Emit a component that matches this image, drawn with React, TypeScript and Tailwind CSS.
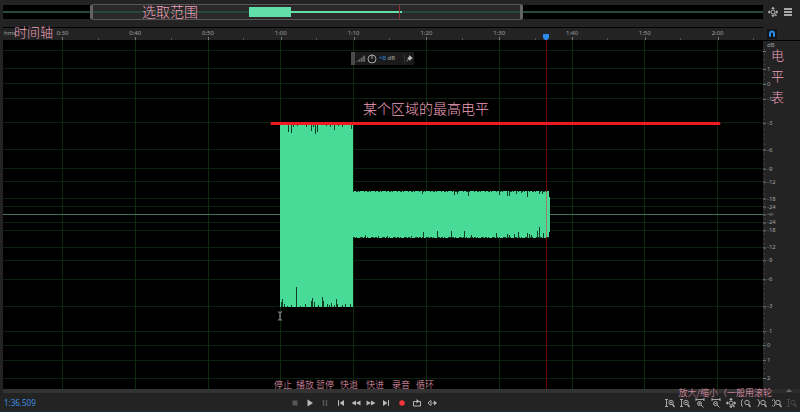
import { useState } from "react";
import type { ReactNode } from "react";

const TIMES = ["0:30", "0:40", "0:50", "1:00", "1:10", "1:20", "1:30", "1:40", "1:50", "2:00"];

// vertical position of every level on the dB scale, inside the 349px editor
const LEVELS: [string, number][] = [
  ["", 10],
  ["1", 28],
  ["0", 43],
  ["-1", 58],
  ["-3", 82],
  ["-6", 109],
  ["-9", 128],
  ["-12", 141],
  ["-18", 158],
  ["-24", 166],
  ["-∞", 174],
  ["-24", 182],
  ["-18", 190],
  ["-12", 207],
  ["-9", 220],
  ["-6", 239],
  ["-3", 266],
  ["-1", 291],
  ["0", 305],
  ["1", 320],
  ["2", 338],
];

// [x, depth] of the notches cut in the edges of the wave form
const LOUD_TOP = [
  [2, 1], [5, 1], [8, 8], [11, 9], [13, 3], [17, 2], [22, 1], [26, 3], [31, 7], [33, 3],
  [35, 10], [37, 8], [40, 1], [46, 2], [50, 3], [54, 6], [58, 2], [62, 3], [65, 1], [71, 5],
];
const LOUD_BOTTOM = [
  [1, 5], [2, 8], [4, 3], [7, 1], [11, 2], [16, 20], [20, 1], [25, 3], [31, 6], [32, 9],
  [34, 5], [38, 2], [42, 10], [43, 6], [47, 3], [49, 2], [51, 4], [54, 2], [56, 8], [57, 3],
  [62, 2], [65, 3], [70, 3],
];
const QUIET_TOP = [
  [69, 3], [101, 4], [104, 3], [115, 5], [146, 4], [154, 5], [156, 5], [163, 3], [168, 2], [174, 6], [186, 3], [189, 3],
];
const QUIET_BOTTOM = [
  [12, 3], [25, 2], [34, 2], [58, 2], [70, 6], [84, 7], [98, 7], [111, 7], [118, 3], [143, 5],
  [154, 4], [156, 3], [161, 4], [165, 6], [174, 5], [176, 4], [178, 3], [184, 7], [186, 11], [190, 5],
];

type IconProps = { children: ReactNode; className?: string };

function Icon({ children, className = "size-[10px]" }: IconProps) {
  return (
    <svg
      viewBox="0 0 20 20"
      className={className}
      fill="none"
      stroke="currentColor"
      strokeWidth="2"
      aria-hidden="true"
    >
      {children}
    </svg>
  );
}

const lens = (
  <>
    <circle cx="12" cy="9" r="4.5" />
    <path d="M15 12.5 19 18" strokeWidth="3" />
  </>
);

const navigatorLens = (
  <>
    <circle cx="10" cy="10" r="4" />
    <path d="m13 13 4 5M0 10h5M15 10h5M10 0v5M10 15v4" strokeWidth="2.5" />
    <path d="M0 10l4-4v8zM20 10l-4-4v8zM10 0 6 4h8zM10 20l-4-4h8z" fill="currentColor" stroke="none" />
  </>
);

const TRANSPORT = [
  { name: "Stop", tone: "text-[#565656]", icon: <path d="M5 5h10v10H5z" fill="currentColor" stroke="none" /> },
  { name: "Play", tone: "text-[#b8b8b8]", icon: <path d="M5 3l11 7-11 7z" fill="currentColor" stroke="none" /> },
  { name: "Pause", tone: "text-[#565656]", icon: <path d="M7 4v12M13 4v12" strokeWidth="3" /> },
  {
    name: "Go to previous",
    tone: "text-[#b8b8b8]",
    icon: <path d="M4 4h2v12H4zM16 4v12l-9-6z" fill="currentColor" stroke="none" />,
  },
  {
    name: "Rewind",
    tone: "text-[#b8b8b8]",
    icon: <path d="M10 5v10l-9-5zM19 5v10l-9-5z" fill="currentColor" stroke="none" />,
  },
  {
    name: "Fast forward",
    tone: "text-[#b8b8b8]",
    icon: <path d="M1 5v10l9-5zM10 5v10l9-5z" fill="currentColor" stroke="none" />,
  },
  {
    name: "Go to next",
    tone: "text-[#b8b8b8]",
    icon: <path d="M14 4h2v12h-2zM4 4v12l9-6z" fill="currentColor" stroke="none" />,
  },
  { name: "Record", tone: "text-[#f2363c]", icon: <circle cx="10" cy="10" r="5.5" fill="currentColor" stroke="none" /> },
  {
    name: "Loop playback",
    tone: "text-[#b8b8b8]",
    icon: (
      <>
        <path d="M7 7H3v9h14V7h-3M7 7h5" />
        <path d="M9 2v9l6-4.5z" fill="currentColor" stroke="none" />
      </>
    ),
  },
  {
    name: "Skip selection",
    tone: "text-[#b8b8b8]",
    icon: (
      <>
        <path d="M7 5 2 10l5 5M8 5v10M11 10h4" />
        <path d="M14 5v10l6-5z" fill="currentColor" stroke="none" />
      </>
    ),
  },
];

const ZOOMS = [
  {
    name: "Zoom in amplitude",
    tone: "text-[#a8a8a8]",
    icon: <>{lens}<path d="M0 3h6M0 17h6M3 3v14M12 7v4M10 9h4" /></>,
  },
  {
    name: "Zoom out amplitude",
    tone: "text-[#a8a8a8]",
    icon: <>{lens}<path d="M0 3h6M0 17h6M3 3v14M10 9h4" /></>,
  },
  {
    name: "Zoom in time",
    tone: "text-[#a8a8a8]",
    icon: <><path d="M2 3h16M2 0v6M18 0v6" /><circle cx="9" cy="11" r="4" /><path d="m12 14 5 5M9 9v4M7 11h4" /></>,
  },
  {
    name: "Zoom out time",
    tone: "text-[#a8a8a8]",
    icon: <><path d="M2 3h16M2 0v6M18 0v6" /><circle cx="9" cy="11" r="4" /><path d="m12 14 5 5M7 11h4" /></>,
  },
  { name: "Zoom reset", tone: "text-[#a8a8a8]", icon: navigatorLens },
  { name: "Zoom in at in point", tone: "text-[#a8a8a8]", icon: <>{lens}<path d="M4 3 1 5v3l-1 2 1 2v3l3 2" /></> },
  { name: "Zoom in at out point", tone: "text-[#a8a8a8]", icon: <>{lens}<path d="m1 3 3 2v3l2 2-2 2v3l-3 2" /></> },
  {
    name: "Zoom to selection",
    tone: "text-[#a8a8a8]",
    icon: <>{lens}<path d="M2 3-1 7v6l3 4M4 3l2 4v6l-2 4" /></>,
  },
  { name: "Zoom selected track", tone: "text-[#484848]", icon: <>{lens}<path d="M0 3h6M0 17h6M3 3v14" /></> },
];

function Overview() {
  return (
    <svg viewBox="0 0 760 16" preserveAspectRatio="none" className="h-4 w-full min-w-0 flex-1">
      <rect y="1" width="760" height="14" fill="#000" />
      <rect x="88.5" y="0.5" width="431" height="15" rx="1" fill="#2a2828" stroke="#575757" />
      <path d="M0 8h760" stroke="#24493a" strokeWidth="2" />
      <rect x="246" y="3" width="42" height="10" fill="#62dfa9" />
      <rect x="287" y="7" width="112" height="2" fill="#62dfa9" />
      <path d="M396.5 1v14" stroke="#8d3434" />
      <rect x="87" y="1" width="3" height="14" rx="1" fill="#636363" />
      <rect x="517" y="1" width="3" height="14" rx="1" fill="#636363" />
    </svg>
  );
}

function TimeRuler() {
  return (
    <div className="relative flex h-[13px] min-w-0 flex-1 border-t border-black bg-[#232323] pl-[23px] pr-[9px] text-[6px] leading-[10px] text-[#a0a0a0]">
      <span className="absolute left-px top-0">hms</span>
      <div className="grid flex-1 grid-cols-10">
        {TIMES.map((time) => (
          <div key={time} className="relative text-center">
            {time}
            <i className="absolute bottom-0 left-1/2 h-[3px] w-px bg-[#777]" />
            <i className="absolute right-0 bottom-0 h-0.5 w-px bg-[#555]" />
          </div>
        ))}
      </div>
      <svg viewBox="0 0 6 6" className="absolute bottom-0 left-[71.5%] size-[6px] -translate-x-1/2" aria-hidden="true">
        <path d="M0 0h6v4L4 6H2L0 4z" fill="#2c8bea" />
      </svg>
    </div>
  );
}

function WaveForm() {
  return (
    <svg viewBox="0 0 760 349" preserveAspectRatio="none" className="block h-full w-full">
      <rect width="760" height="349" fill="#000" />
      <g stroke="#0b220e">
        {LEVELS.map(([, y]) => (
          <path key={y} d={`M0 ${y + 0.5}h760`} />
        ))}
      </g>
      <g stroke="#0d290f">
        {TIMES.map((time, i) => (
          <path key={time} d={`M${Math.round(59 + i * 72.8) + 0.5} 0v349`} />
        ))}
      </g>
      <path d="M0 174.5h760" stroke="#3f7560" />

      <g fill="#48db98">
        <rect x="277" y="84" width="73" height="183" />
        <rect x="350" y="151" width="196" height="47" />
        <rect x="546" y="157" width="1" height="35" />
      </g>
      <g fill="#123d29">
        {LOUD_TOP.map(([x, d]) => (
          <rect key={x} x={277 + x} y="84" width="1" height={d} />
        ))}
        {LOUD_BOTTOM.map(([x, d]) => (
          <rect key={x} x={277 + x} y={267 - d} width="1" height={d} />
        ))}
        {QUIET_TOP.map(([x, d]) => (
          <rect key={x} x={350 + x} y="151" width="1" height={d} />
        ))}
        {QUIET_BOTTOM.map(([x, d]) => (
          <rect key={x} x={350 + x} y={198 - d} width="1" height={d} />
        ))}
        <path d="M350 151.5h196" stroke="#123d29" strokeDasharray="1 2 2 1 1 4" />
        <path d="M350 197.5h196" stroke="#123d29" strokeDasharray="2 1 1 3 3 1" />
      </g>

      <path d="M543.5 0v349" stroke="#6a0505" />
      <path d="M543.5 152v45" stroke="#a08060" />
      <path d="M269 83.5h447" stroke="#ef1a20" strokeWidth="3" strokeLinecap="round" />
      <path d="M275 272h1.5l.5.5.5-.5h1.5M277 272.5v7M275 280h1.5l.5-.5.5.5h1.5" stroke="#aaa" fill="none" />
    </svg>
  );
}

function GainHud() {
  return (
    <div className="absolute left-[348px] top-3 flex h-[13px] w-[63px] items-center bg-[#1b1b1b] text-[6px] font-semibold text-[#8a8a8a]">
      <div className="h-full w-1 bg-[#4a4a4a]" />
      <svg viewBox="0 0 20 20" className="ml-px size-[9px]" aria-hidden="true">
        <path d="M0 17 20 2v15z" fill="#666" />
        <path d="M5 0v20M10 0v20M15 0v20" stroke="#1b1b1b" />
      </svg>
      <button aria-label="Gain" className="ml-0.5 text-[#a5a5a5]">
        <Icon>
          <circle cx="10" cy="10" r="8" />
          <path d="M10 1v9" />
        </Icon>
      </button>
      <span className="ml-0.5 whitespace-nowrap">
        <span className="text-[#2c7fd0]">+0</span> dB
      </span>
      <button aria-label="Pin" className="ml-auto flex h-[9px] items-center border-l border-[#333] px-px text-[#c4c4c4]">
        <Icon className="size-[7px]">
          <path d="M10 2l8 7-4 1-3 5-6-6 5-3zM7 12l-5 6" fill="currentColor" />
        </Icon>
      </button>
    </div>
  );
}

function LevelScale() {
  return (
    <svg viewBox="0 0 37 349" className="h-full w-[37px] shrink-0 border-t border-black">
      <path d="M1.5 8v334" stroke="#5a5a5a" strokeDasharray="1 4" />
      <g fontSize="6" fill="#a0a0a0">
        <text x="4" y="6">dB</text>
        {LEVELS.map(([label, y]) => (
          <g key={y}>
            <path d={`M0 ${y + 0.5}h3`} stroke="#777" />
            <text x="4" y={y + 2}>{label}</text>
          </g>
        ))}
      </g>
    </svg>
  );
}

function Note({ children, className }: { children: ReactNode; className: string }) {
  return (
    <span
      className={`pointer-events-none absolute font-['Noto_Sans_CJK_SC',sans-serif] font-light text-[#f0a0bd] ${className}`}
    >
      {children}
    </span>
  );
}

export default function App() {
  const [snapping, setSnapping] = useState(true);

  return (
    <div className="w-full bg-[#232323] pt-1 font-['Noto_Sans',sans-serif]">
      <div className="relative flex pl-[3px]">
        <Overview />
        <div className="flex w-[37px] items-center gap-[5px] pl-[5px] text-[#a8a8a8]">
          <button aria-label="Zoom navigator">
            <Icon>{navigatorLens}</Icon>
          </button>
          <button aria-label="Editor list">
            <Icon>
              <path d="M2 4h16M2 10h16M2 16h16" strokeWidth="4" />
            </Icon>
          </button>
        </div>
        <Note className="left-[142px] top-0 whitespace-nowrap text-[14px] leading-[14px]">选取范围</Note>
      </div>

      <div className="relative mt-[7px] flex pl-[3px]">
        <TimeRuler />
        <div className="flex w-[37px] items-center pl-1">
          <button
            aria-label="Toggle snapping"
            aria-pressed={snapping}
            onClick={() => setSnapping(!snapping)}
            className={`flex size-[10px] items-center justify-center bg-[#101418] ${snapping ? "text-[#2c8bea]" : "text-[#777]"}`}
          >
            <Icon className="size-2">
              <path d="M5 17V9a5 5 0 0 1 10 0v8" strokeWidth="5" />
            </Icon>
          </button>
        </div>
        <Note className="-top-[2px] left-[14px] whitespace-nowrap text-[13px] leading-[13px]">时间轴</Note>
      </div>

      <main className="relative flex h-[349px] pl-[3px]">
        <div className="relative min-w-0 flex-1">
          <WaveForm />
          <GainHud />
          <Note className="left-[360px] top-[61px] whitespace-nowrap text-[14px] leading-[14px]">某个区域的最高电平</Note>
        </div>
        <LevelScale />
        <Note className="right-[16px] top-1 w-[13px] text-[13px] leading-[21px]">电平表</Note>
      </main>

      <div className="flex h-[5px] pl-[3px]">
        <div className="h-1 flex-1 bg-[#333]" />
        <div className="flex h-1 w-[37px] justify-end bg-[#2c2c2c] pr-2">
          <svg viewBox="0 0 6 4" className="h-1 w-[6px]" aria-hidden="true">
            <path d="M3 0l3 3H0z" fill="#6a6a6a" />
          </svg>
        </div>
      </div>

      <footer className="relative flex h-[18px] items-center border-b border-[#1b2b3b]">
        <time className="w-[287px] pl-1 text-[8px] leading-[18px] text-[#3a8fe0]">1:36.509</time>
        <div className="grid w-[153px] grid-cols-10">
          {TRANSPORT.map(({ name, tone, icon }) => (
            <button key={name} aria-label={name} className={`flex justify-center ${tone}`}>
              <Icon>{icon}</Icon>
            </button>
          ))}
        </div>
        <div className="ml-auto grid w-[138px] grid-cols-9">
          {ZOOMS.map(({ name, tone, icon }) => (
            <button key={name} aria-label={name} className={`flex justify-center ${tone}`}>
              <Icon>{icon}</Icon>
            </button>
          ))}
        </div>
        <Note className="-top-[14px] left-[274px] flex whitespace-nowrap text-[9px] leading-[10px]">
          <span className="w-[22px]">停止</span>
          <span className="w-[20px]">播放</span>
          <span className="w-[24px]">暂停</span>
          <span className="w-[26px]">快退</span>
          <span className="w-[26px]">快进</span>
          <span className="w-[24px]">录音</span>
          <span>循环</span>
        </Note>
        <Note className="-top-[6px] right-7 whitespace-nowrap text-[9px] leading-[10px]">放大/缩小（一般用滚轮</Note>
      </footer>
    </div>
  );
}
